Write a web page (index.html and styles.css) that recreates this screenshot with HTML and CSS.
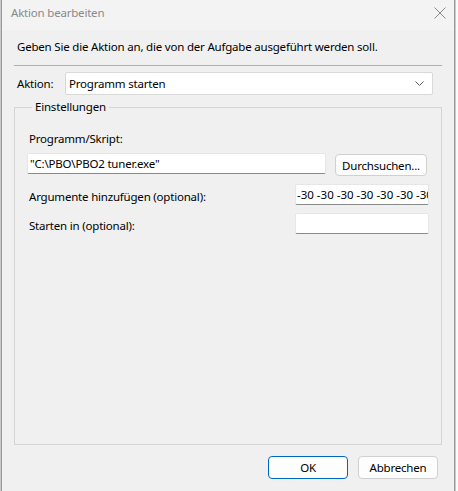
FILE: index.html
```html
<!DOCTYPE html>
<html lang="de">
<head>
    <meta charset="UTF-8">
    <title>Aktion bearbeiten</title>
    <link rel="stylesheet" href="styles.css">
</head>
<body>
    <div class="dialog">
        <div class="titlebar">
            <span class="title">Aktion bearbeiten</span>
            <svg class="close" width="12" height="12" viewBox="0 0 12 12">
                <path d="M0.5 0.5 L11.5 11.5 M11.5 0.5 L0.5 11.5" stroke="#8c8c8c" stroke-width="1" fill="none"/>
            </svg>
        </div>

        <div class="content">
            <p class="intro">Geben Sie die Aktion an, die von der Aufgabe ausgeführt werden soll.</p>
            <div class="sep"></div>

            <div class="action-row">
                <span class="label">Aktion:</span>
                <div class="combo">
                    <span>Programm starten</span>
                    <svg width="9" height="5" viewBox="0 0 9 5">
                        <path d="M0.5 0.5 L4.5 4.5 L8.5 0.5" stroke="#5a5a5a" stroke-width="1" fill="none"/>
                    </svg>
                </div>
            </div>

            <fieldset class="group">
                <legend>Einstellungen</legend>

                <div class="field-label">Programm/Skript:</div>
                <div class="program-row">
                    <div class="textbox wide">"C:\PBO\PBO2 tuner.exe"</div>
                    <button class="btn browse">Durchsuchen...</button>
                </div>

                <div class="opt-row">
                    <span class="label">Argumente hinzufügen (optional):</span>
                    <div class="textbox narrow">-30 -30 -30 -30 -30 -30 -30 -30</div>
                </div>
                <div class="opt-row">
                    <span class="label">Starten in (optional):</span>
                    <div class="textbox narrow"></div>
                </div>
            </fieldset>

            <div class="buttons">
                <button class="btn default">OK</button>
                <button class="btn">Abbrechen</button>
            </div>
        </div>
    </div>
</body>
</html>
```

FILE: styles.css
```css
body {
    margin: 0;
    background: #fafafa;
    font-family: "Noto Sans", "Open Sans", sans-serif;
    font-size: 11.5px;
    letter-spacing: -0.2px;
    color: #000;
}
.dialog {
    box-sizing: border-box;
    width: 454px;
    height: 491px;
    margin-left: 1px;
    background: #f0f0f0;
    border-left: 1px solid #9c9c9c;
    border-right: 1px solid #9c9c9c;
    box-shadow: 1px 0 0 #c8c8c8, -1px 0 0 #c8c8c8;
    display: flex;
    flex-direction: column;
}
.titlebar {
    height: 30px;
    background: #f3f3f3;
    display: flex;
    align-items: flex-start;
    justify-content: space-between;
    padding: 5px 8px 0 9px;
    box-sizing: border-box;
}
.title {
    line-height: 16px;
    color: #8a8a8a;
}
.close {
    margin-top: 2px;
}
.content {
    flex: 1;
    display: flex;
    flex-direction: column;
    padding: 0 12px 12px 12px;
}
.intro {
    margin: 9px 0 0 3px;
    line-height: 16px;
}
.sep {
    height: 1px;
    margin-top: 10px;
    background: #b0b0b0;
}
.action-row {
    display: flex;
    align-items: center;
    margin-top: 6px;
    padding-left: 3px;
    margin-right: 9px;
}
.action-row .label {
    width: 48px;
}
.combo {
    flex: 1;
    height: 23px;
    box-sizing: border-box;
    background: #fff;
    border: 1px solid #d9d9d9;
    border-radius: 2px;
    display: flex;
    align-items: center;
    justify-content: space-between;
    padding: 0 8px 0 3px;
}
.group {
    flex: 1;
    margin: 4px 0 0 0;
    padding: 0 12px 0 12px;
    border: 1px solid #d5d5d5;
    border-radius: 0;
    min-width: 0;
}
.group legend {
    margin-left: 5px;
    padding: 0 3px;
    line-height: 16px;
}
.field-label {
    margin-top: 16px;
    padding-left: 2px;
    line-height: 16px;
}
.program-row {
    display: flex;
    align-items: flex-start;
    gap: 9px;
    margin-top: 6px;
}
.textbox {
    box-sizing: border-box;
    height: 21px;
    background: #fff;
    border: 1px solid #e6e6e6;
    border-bottom-color: #8a8a8a;
    border-radius: 2px;
    padding: 0 2px;
    line-height: 19px;
    white-space: nowrap;
    overflow: hidden;
}
.textbox.wide {
    width: 299px;
}
.textbox.narrow {
    width: 134px;
    padding-left: 1px;
    letter-spacing: 0;
}
.opt-row {
    display: flex;
    justify-content: space-between;
    align-items: center;
    margin-top: 8px;
    padding-left: 2px;
}
.opt-row + .opt-row {
    margin-top: 8px;
}
.opt-row .label {
    padding-top: 4px;
}
.btn {
    box-sizing: border-box;
    height: 22px;
    background: #fdfdfd;
    border: 1px solid #d0d0d0;
    border-radius: 4px;
    font-family: inherit;
    font-size: 11.5px;
    letter-spacing: -0.2px;
    color: #000;
    padding: 0;
}
.btn.browse {
    width: 92px;
    margin-top: 1px;
}
.buttons {
    display: flex;
    justify-content: flex-end;
    gap: 10px;
    margin-top: 11px;
    padding-right: 4px;
}
.buttons .btn {
    width: 80px;
    height: 23px;
}
.btn.default {
    border-color: #0067c0;
}
```
